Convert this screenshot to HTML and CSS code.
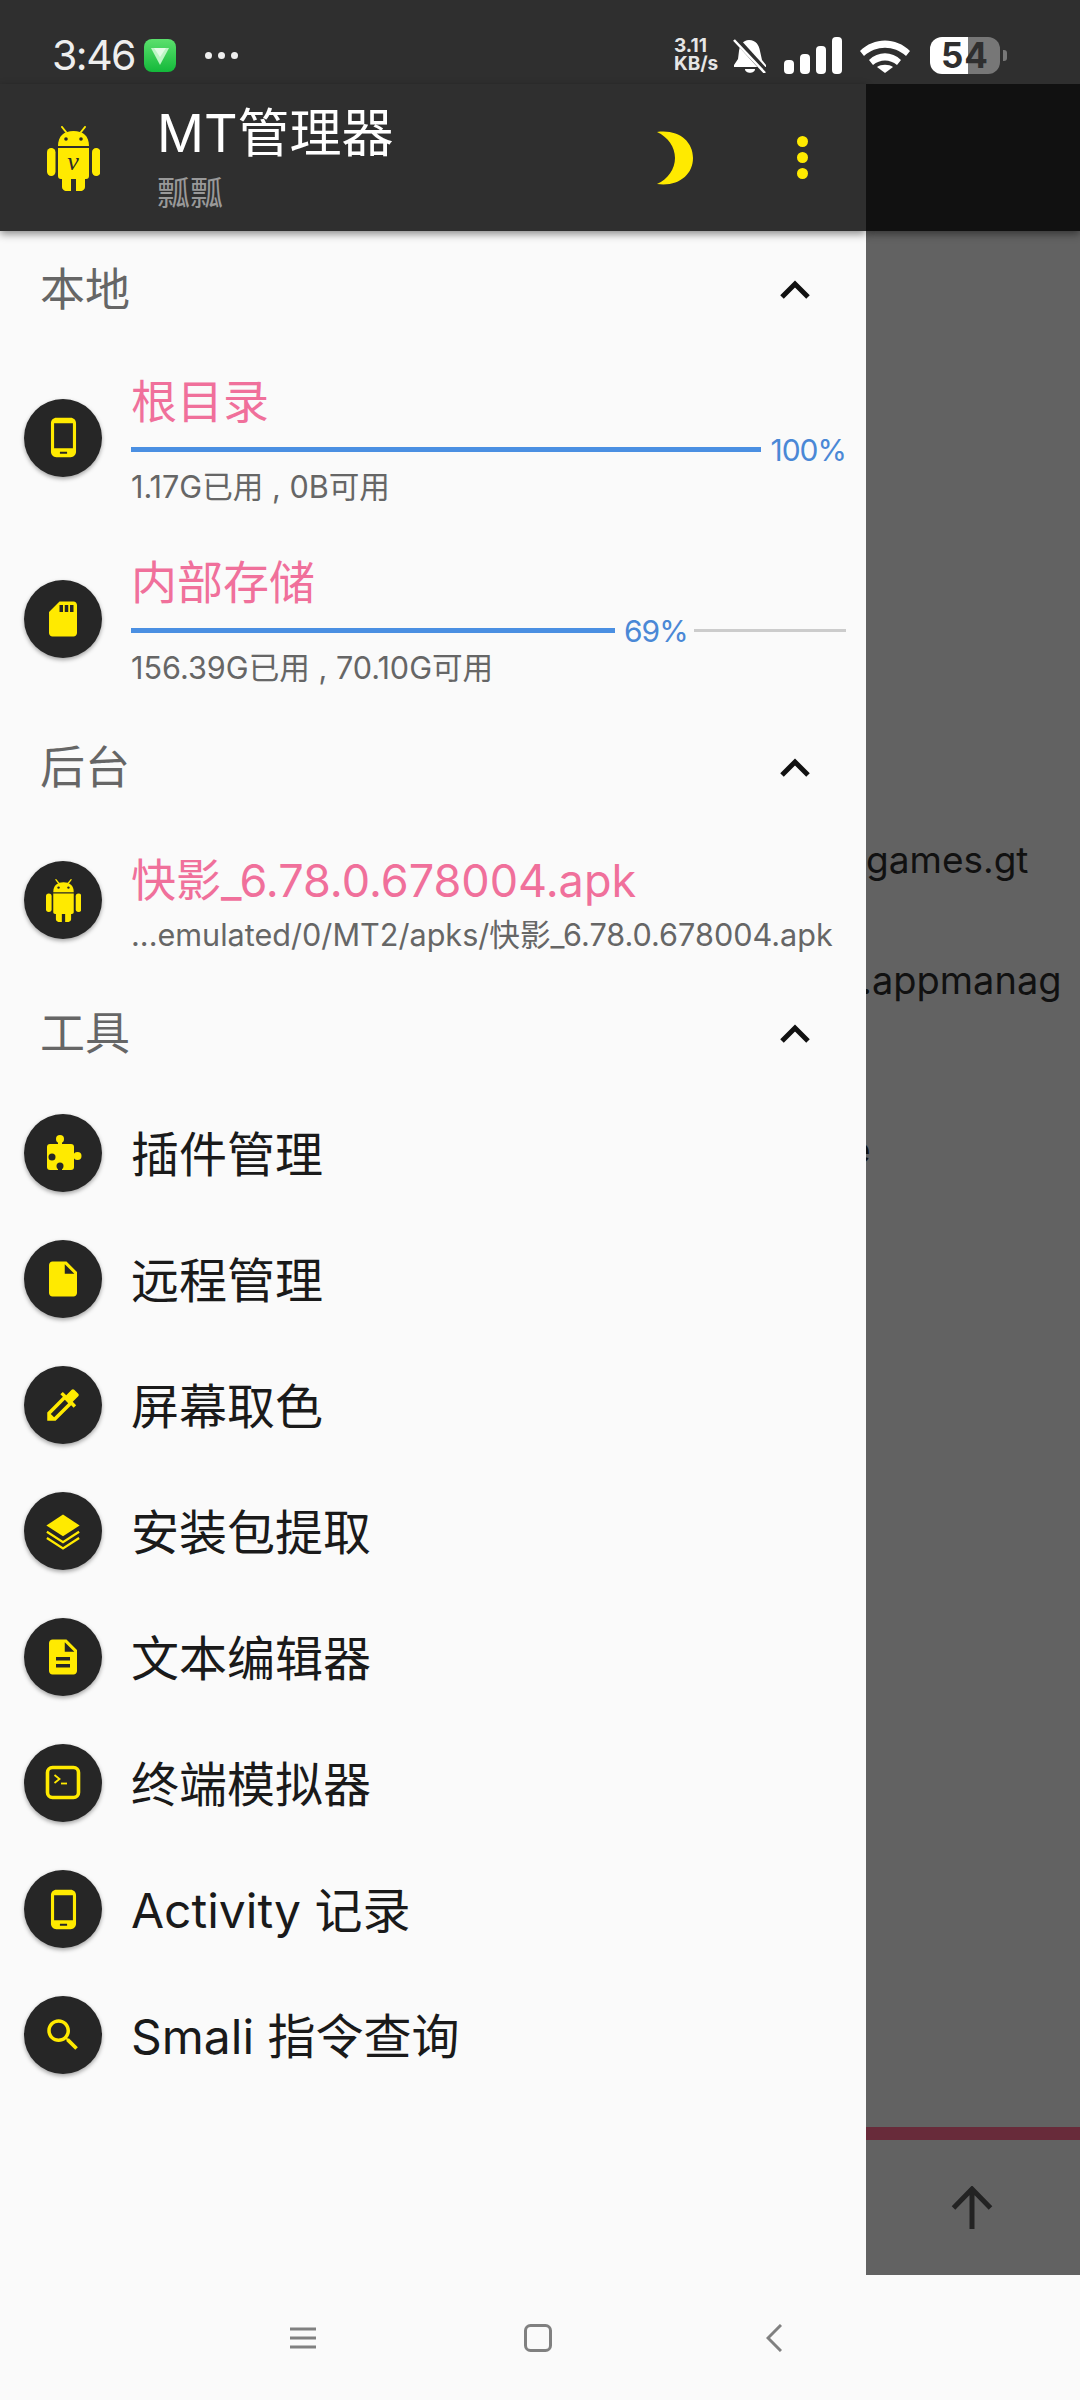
FILE: index.html
```html
<!DOCTYPE html>
<html lang="zh">

<head>
    <meta charset="UTF-8">
    <meta name="viewport" content="width=device-width, initial-scale=1.0">
    <title>MT管理器</title>
    <link rel="stylesheet" href="styles.css">
</head>

<body>
    <svg class="defs" width="0" height="0">
        <symbol id="android" viewBox="0 0 53 65">
            <path d="M15 1l4 5M38 1l-4 5" stroke="currentColor" stroke-width="2" stroke-linecap="round" />
            <path d="M11 20C11 10 17 5 26.500 5S42 10 42 20z" fill="currentColor" />
            <path d="M11 22h31v28c0 2-1 3-3 3h-1v8c0 5-9 5-9 4v-12h-5v12c0 1-9 1-9-4v-8h-1c-2 0-3-1-3-3z" fill="currentColor" />
            <rect x="0" y="22" width="8.500" height="28" rx="4.200" fill="currentColor" />
            <rect x="45" y="22" width="8.500" height="28" rx="4.200" fill="currentColor" />
            <circle cx="19" cy="13" r="1.800" fill="#2a2a2a" />
            <circle cx="34" cy="13" r="1.800" fill="#2a2a2a" />
        </symbol>
    </svg>

    <div class="statusbar">
        <span class="clock">3:46</span>
        <span class="app-badge">
            <svg viewBox="0 0 32 33" width="32" height="33">
                <path d="M7 9h18l-9 17z" fill="#bdf5c4" />
                <path d="M10 9h12l-6 9z" fill="#e4fbe6" />
            </svg>
        </span>
        <span class="status-dots"><i></i><i></i><i></i></span>
        <div class="status-right">
            <span class="speed">3.11<br>KB/s</span>
            <svg class="bell" viewBox="0 0 34 36" width="34" height="36">
                <path d="M16 3c7 0 10 5 11 11l2 9 4 5v2H1v-2l4-6 1-8c1-6 4-11 10-11z" fill="#fff" />
                <path d="M12 32h10c0 5-10 5-10 0z" fill="#fff" />
                <path d="M2 1l30 33" stroke="#2f2f2f" stroke-width="6" />
                <path d="M1 3l31 33" stroke="#fff" stroke-width="2.500" />
            </svg>
            <div class="signal">
                <i class="s1"></i><i class="s2"></i><i class="s3"></i><i class="s4"></i>
            </div>
            <svg class="wifi" viewBox="0 0 50 36" width="50" height="36">
                <path d="M0 14C14 0 36 0 50 14l-4 5C34 8 16 8 4 19z" fill="#fff" />
                <path d="M9 23c9-9 23-9 32 0l-4 5c-7-6-17-6-24 0z" fill="#fff" />
                <path d="M17 30c4-3 12-3 16 0l-8 6z" fill="#fff" />
            </svg>
            <div class="battery-wrap">
                <div class="battery">54</div>
                <i class="battery-nub"></i>
            </div>
        </div>
    </div>

    <div class="main">
        <div class="drawer">
            <header class="appbar">
                <svg class="app-logo" width="53" height="65">
                    <use href="#android" />
                    <text class="logo-mark" x="26" y="44">v</text>
                </svg>
                <div class="app-title">
                    <h1>MT管理器</h1>
                    <p>瓢瓢</p>
                </div>
                <svg class="moon" viewBox="0 0 38 54" width="38" height="54">
                    <path d="M1 1C22-2 37 10 37 27S22 56 1 53c11-5 18-15 18-26S12 6 1 1z" fill="currentColor" />
                </svg>
                <div class="more"><i></i><i></i><i></i></div>
            </header>

            <div class="section-head">
                <h2>本地</h2>
                <svg class="chevron" viewBox="0 0 32 20" width="32" height="20"><path d="M3 18L16 5l13 13" /></svg>
            </div>
            <div class="storage-item">
                <span class="round-icon">
                    <svg viewBox="0 0 24 24" width="43" height="43"><path d="M16 1H8C6.340 1 5 2.340 5 4v16c0 1.660 1.340 3 3 3h8c1.660 0 3-1.340 3-3V4c0-1.660-1.340-3-3-3zm-2 20h-4v-1h4v1zm3.250-3H6.750V4h10.500v14z" /></svg>
                </span>
                <div class="item-body">
                    <div class="item-title">根目录</div>
                    <div class="meter">
                        <div class="meter-fill meter-grow"></div>
                        <span class="meter-label">100%</span>
                    </div>
                    <div class="item-sub">1.17G已用 , 0B可用</div>
                </div>
            </div>
            <div class="storage-item">
                <span class="round-icon">
                    <svg viewBox="0 0 24 24" width="42" height="42"><path d="M18 2h-8L4.020 8 4 20c0 1.100.9 2 2 2h12c1.100 0 2-.9 2-2V4c0-1.100-.9-2-2-2zm-6 6h-2V4h2v4zm3 0h-2V4h2v4zm3 0h-2V4h2v4z" /></svg>
                </span>
                <div class="item-body">
                    <div class="item-title">内部存储</div>
                    <div class="meter">
                        <div class="meter-fill" style="width: 484px"></div>
                        <span class="meter-label">69%</span>
                        <div class="meter-rest"></div>
                    </div>
                    <div class="item-sub">156.39G已用 , 70.10G可用</div>
                </div>
            </div>

            <div class="section-head">
                <h2>后台</h2>
                <svg class="chevron" viewBox="0 0 32 20" width="32" height="20"><path d="M3 18L16 5l13 13" /></svg>
            </div>
            <div class="task-item">
                <span class="round-icon">
                    <svg class="android-small" width="35" height="43"><use href="#android" /></svg>
                </span>
                <div class="item-body">
                    <div class="item-title">快影_6.78.0.678004.apk</div>
                    <div class="item-sub">...emulated/0/MT2/apks/快影_6.78.0.678004.apk</div>
                </div>
            </div>

            <div class="section-head">
                <h2>工具</h2>
                <svg class="chevron" viewBox="0 0 32 20" width="32" height="20"><path d="M3 18L16 5l13 13" /></svg>
            </div>
            <div class="tool-list">
                <div class="tool-row">
                    <span class="round-icon">
                        <svg viewBox="0 0 48 48" width="48" height="48">
                            <rect x="8" y="15" width="27" height="26" rx="3" />
                            <path d="M19 16v-6h4v6zM34 25h6v4h-6z" />
                            <circle cx="21" cy="10" r="4" />
                            <circle cx="38.500" cy="27" r="4" />
                            <circle cx="13" cy="28" r="3.500" fill="#262626" />
                            <circle cx="21" cy="37" r="3.500" fill="#262626" />
                            <path d="M19 37h4v4h-4z" fill="#262626" />
                        </svg>
                    </span>
                    <span class="tool-name">插件管理</span>
                </div>
                <div class="tool-row">
                    <span class="round-icon">
                        <svg viewBox="0 0 24 24" width="42" height="42"><path d="M6 2c-1.100 0-1.990.9-1.990 2L4 20c0 1.100.89 2 1.990 2H18c1.100 0 2-.9 2-2V8l-6-6H6zm7 7V3.500L18.500 9H13z" /></svg>
                    </span>
                    <span class="tool-name">远程管理</span>
                </div>
                <div class="tool-row">
                    <span class="round-icon">
                        <svg viewBox="0 0 24 24" width="42" height="42"><path d="M20.710 5.630l-2.340-2.340c-.39-.39-1.020-.39-1.410 0l-3.120 3.120-1.930-1.910-1.410 1.410 1.420 1.420L3 16.250V21h4.750l8.920-8.920 1.420 1.420 1.410-1.410-1.920-1.920 3.120-3.120c.4-.4.4-1.030.01-1.420zM6.920 19L5 17.080l8.060-8.060 1.920 1.920L6.920 19z" /></svg>
                    </span>
                    <span class="tool-name">屏幕取色</span>
                </div>
                <div class="tool-row">
                    <span class="round-icon">
                        <svg viewBox="0 0 24 24" width="42" height="42">
                            <path d="M12 2.500l9.500 6.300-9.500 6.200-9.500-6.200z" />
                            <path d="M2.800 12.400l9.200 6 9.200-6M2.800 16l9.200 6 9.200-6" fill="none" stroke="currentColor" stroke-width="1.300" />
                        </svg>
                    </span>
                    <span class="tool-name">安装包提取</span>
                </div>
                <div class="tool-row">
                    <span class="round-icon">
                        <svg viewBox="0 0 24 24" width="42" height="42"><path d="M14 2H6c-1.100 0-1.990.9-1.990 2L4 20c0 1.100.89 2 1.990 2H18c1.100 0 2-.9 2-2V8l-6-6zm2 16H8v-2h8v2zm0-4H8v-2h8v2zm-3-5V3.500L18.500 9H13z" /></svg>
                    </span>
                    <span class="tool-name">文本编辑器</span>
                </div>
                <div class="tool-row">
                    <span class="round-icon">
                        <svg viewBox="0 0 36 36" width="36" height="36">
                            <rect x="2.500" y="2.500" width="31" height="30" rx="5" fill="none" stroke="currentColor" stroke-width="3.600" />
                            <path d="M9.500 10l5 4-5 4" fill="none" stroke="currentColor" stroke-width="1.800" />
                            <path d="M16 18.500h6" stroke="currentColor" stroke-width="1.800" />
                        </svg>
                    </span>
                    <span class="tool-name">终端模拟器</span>
                </div>
                <div class="tool-row">
                    <span class="round-icon">
                        <svg viewBox="0 0 24 24" width="43" height="43"><path d="M16 1H8C6.340 1 5 2.340 5 4v16c0 1.660 1.340 3 3 3h8c1.660 0 3-1.340 3-3V4c0-1.660-1.340-3-3-3zm-2 20h-4v-1h4v1zm3.250-3H6.750V4h10.500v14z" /></svg>
                    </span>
                    <span class="tool-name">Activity 记录</span>
                </div>
                <div class="tool-row">
                    <span class="round-icon">
                        <svg viewBox="0 0 24 24" width="42" height="42"><path d="M15.500 14h-.79l-.28-.27C15.410 12.590 16 11.110 16 9.500 16 5.910 13.090 3 9.500 3S3 5.910 3 9.500 5.910 16 9.500 16c1.610 0 3.090-.59 4.230-1.570l.27.28v.79l5 4.990L20.490 19l-4.990-5zm-6 0C7.010 14 5 11.990 5 9.500S7.010 5 9.500 5 14 7.010 14 9.500 11.990 14 9.500 14z" /></svg>
                    </span>
                    <span class="tool-name">Smali 指令查询</span>
                </div>
            </div>
        </div>

        <div class="scrim">
            <div class="scrim-top"></div>
            <div class="scrim-body">
                <div class="behind-line">games.gt</div>
                <div class="behind-line line-manager">.appmanag</div>
                <div class="behind-line line-last">e</div>
                <div class="behind-footer">
                    <svg viewBox="0 0 42 44" width="42" height="44">
                        <path d="M21 3v40M2.500 22L21 3l18.500 19" fill="none" stroke="#232323" stroke-width="5" />
                    </svg>
                </div>
            </div>
        </div>
    </div>

    <div class="navbar">
        <svg viewBox="0 0 28 24" width="28" height="24"><path d="M1 3h26M1 12h26M1 21h26" /></svg>
        <svg class="nav-home" viewBox="0 0 28 28" width="28" height="28"><rect x="1.500" y="1.500" width="25" height="25" rx="5" /></svg>
        <svg class="nav-back" viewBox="0 0 16 28" width="16" height="28"><path d="M15 1L2 14l13 13" /></svg>
    </div>
</body>

</html>
```

FILE: styles.css
```css
* {
    box-sizing: border-box;
}

body {
    margin: 0;
    width: 1080px;
    height: 2400px;
    overflow: hidden;
    display: flex;
    flex-direction: column;
    background-color: #fafafa;
    font-family: Inter, "Noto Sans CJK SC", sans-serif;
}

.defs {
    position: absolute;
}

/* status bar */
.statusbar {
    height: 84px;
    display: flex;
    align-items: center;
    padding: 26px 73px 0 52px;
    background-color: #2f2f2f;
    color: #eee;
}

.clock {
    font-size: 41px;
    line-height: 58px;
    letter-spacing: -1.5px;
}

.app-badge {
    width: 32px;
    height: 33px;
    margin-left: 9px;
    border-radius: 8px;
    background: linear-gradient(#5be06d, #13b93a);
}

.status-dots {
    display: flex;
    gap: 6px;
    margin-left: 29px;
}

.status-dots i {
    width: 7px;
    height: 7px;
    border-radius: 50%;
    background-color: #eee;
}

.status-right {
    margin-left: auto;
    display: flex;
    align-items: center;
}

.speed {
    width: 50px;
    font-size: 19px;
    font-weight: 700;
    line-height: 18px;
    color: #e6e6e6;
}

.bell {
    margin-left: 9px;
}

.signal {
    height: 37px;
    display: flex;
    align-items: flex-end;
    gap: 6px;
    margin-left: 17px;
}

.signal i {
    width: 10px;
    border-radius: 4px;
    background-color: #fff;
}

.signal .s1 {
    height: 14px;
}

.signal .s2 {
    height: 20px;
}

.signal .s3 {
    height: 28px;
}

.signal .s4 {
    height: 37px;
}

.wifi {
    margin-left: 18px;
}

.battery-wrap {
    display: flex;
    align-items: center;
    gap: 3px;
    margin-left: 20px;
}

.battery {
    width: 70px;
    height: 37px;
    border-radius: 12px;
    background: linear-gradient(90deg, #fff 38px, #777 38px);
    color: #2f2f2f;
    font-size: 35px;
    font-weight: 700;
    line-height: 37px;
    letter-spacing: 1px;
    text-align: center;
}

.battery-nub {
    width: 4px;
    height: 11px;
    border-radius: 0 3px 3px 0;
    background-color: #777;
}

/* drawer */
.main {
    flex: 1;
    display: flex;
}

.drawer {
    width: 866px;
    display: flex;
    flex-direction: column;
    background-color: #fafafa;
}

.appbar {
    height: 147px;
    display: flex;
    align-items: center;
    padding: 0 58px 0 47px;
    background-color: #2f2f2f;
    box-shadow: 0 3px 8px rgba(0, 0, 0, 0.45);
    color: #ffea00;
    position: relative;
}

.app-logo {
    margin-top: 2px;
}

.logo-mark {
    font-family: "Liberation Serif", serif;
    font-style: italic;
    font-size: 26px;
    text-anchor: middle;
    fill: #2a2a2a;
}

.app-title {
    margin-left: 57px;
    padding-top: 1px;
}

.app-title h1 {
    margin: 0;
    font-size: 52px;
    font-weight: 400;
    line-height: 58px;
    color: #fff;
}

.app-title p {
    margin: 12px 0 0;
    font-size: 33px;
    line-height: 36px;
    color: #999;
}

.moon {
    margin-left: auto;
}

.more {
    display: flex;
    flex-direction: column;
    gap: 5px;
    margin-left: 103px;
}

.more i {
    width: 11px;
    height: 11px;
    border-radius: 50%;
    background-color: #ffea00;
}

.section-head {
    height: 88px;
    flex-shrink: 0;
    display: flex;
    align-items: center;
    justify-content: space-between;
    margin: 14px 0;
    padding: 0 55px 0 40px;
}

.section-head h2 {
    margin: 0 0 5px;
    font-size: 45px;
    font-weight: 400;
    color: #666;
}

.chevron path {
    fill: none;
    stroke: #111;
    stroke-width: 5;
}

.round-icon {
    width: 78px;
    height: 78px;
    flex-shrink: 0;
    display: flex;
    align-items: center;
    justify-content: center;
    border-radius: 50%;
    background-color: #262626;
    box-shadow: 0 2px 4px rgba(0, 0, 0, 0.35);
    color: #ffea00;
}

.round-icon svg {
    fill: currentColor;
}

.storage-item,
.task-item {
    display: flex;
    align-items: center;
    gap: 29px;
    padding: 0 20px 0 24px;
}

.storage-item {
    height: 181px;
}

.task-item {
    height: 150px;
}

.task-item .item-body {
    padding-top: 4px;
}

.item-body {
    flex: 1;
    min-width: 0;
}

.item-title {
    font-size: 46px;
    line-height: 60px;
    color: #f0709b;
    white-space: nowrap;
}

.task-item .item-title {
    font-size: 45px;
}

.meter {
    height: 38px;
    display: flex;
    align-items: center;
}

.meter-fill {
    height: 5px;
    background-color: #4a8fe2;
}

.meter-grow {
    flex: 1;
}

.meter-label {
    margin: 0 6px 0 9px;
    font-size: 30px;
    letter-spacing: -1px;
    color: #4a88d6;
}

.meter-grow + .meter-label {
    margin-right: 0;
}

.meter-rest {
    flex: 1;
    height: 3px;
    background-color: #ccc;
}

.item-sub {
    font-size: 30.6px;
    line-height: 36px;
    color: #666;
    white-space: nowrap;
}

.task-item .item-sub {
    margin-top: 6px;
}

.tool-list {
    margin-top: -1px;
}

.tool-row {
    height: 126px;
    display: flex;
    align-items: center;
    gap: 29px;
    padding-left: 24px;
}

.tool-name {
    padding-bottom: 5px;
    font-size: 48px;
    color: #1a1a1a;
}

/* dimmed page behind the drawer */
.scrim {
    flex: 1;
    display: flex;
    flex-direction: column;
    overflow: hidden;
    background-color: #626262;
}

.scrim-top {
    height: 147px;
    background-color: #111;
    box-shadow: 0 3px 8px rgba(0, 0, 0, 0.45);
    position: relative;
}

.scrim-body {
    flex: 1;
    display: flex;
    flex-direction: column;
    padding-top: 599px;
}

.behind-line {
    font-size: 37px;
    line-height: 60px;
    color: #111;
    white-space: nowrap;
}

.line-manager {
    margin: 60px 0 0 -5px;
    font-size: 38px;
}

.line-last {
    margin: 110px 0 0 -17px;
}

.behind-footer {
    height: 148px;
    margin-top: auto;
    display: flex;
    align-items: center;
    justify-content: center;
    padding-right: 3px;
    border-top: 13px solid #682b3a;
}

/* navigation bar */
.navbar {
    height: 125px;
    display: flex;
    align-items: center;
    padding-left: 289px;
    background-color: #fafafa;
}

.navbar svg {
    fill: none;
    stroke: #808080;
    stroke-width: 3;
}

.nav-home {
    margin-left: 207px;
}

.nav-back {
    margin-left: 214px;
}
```
